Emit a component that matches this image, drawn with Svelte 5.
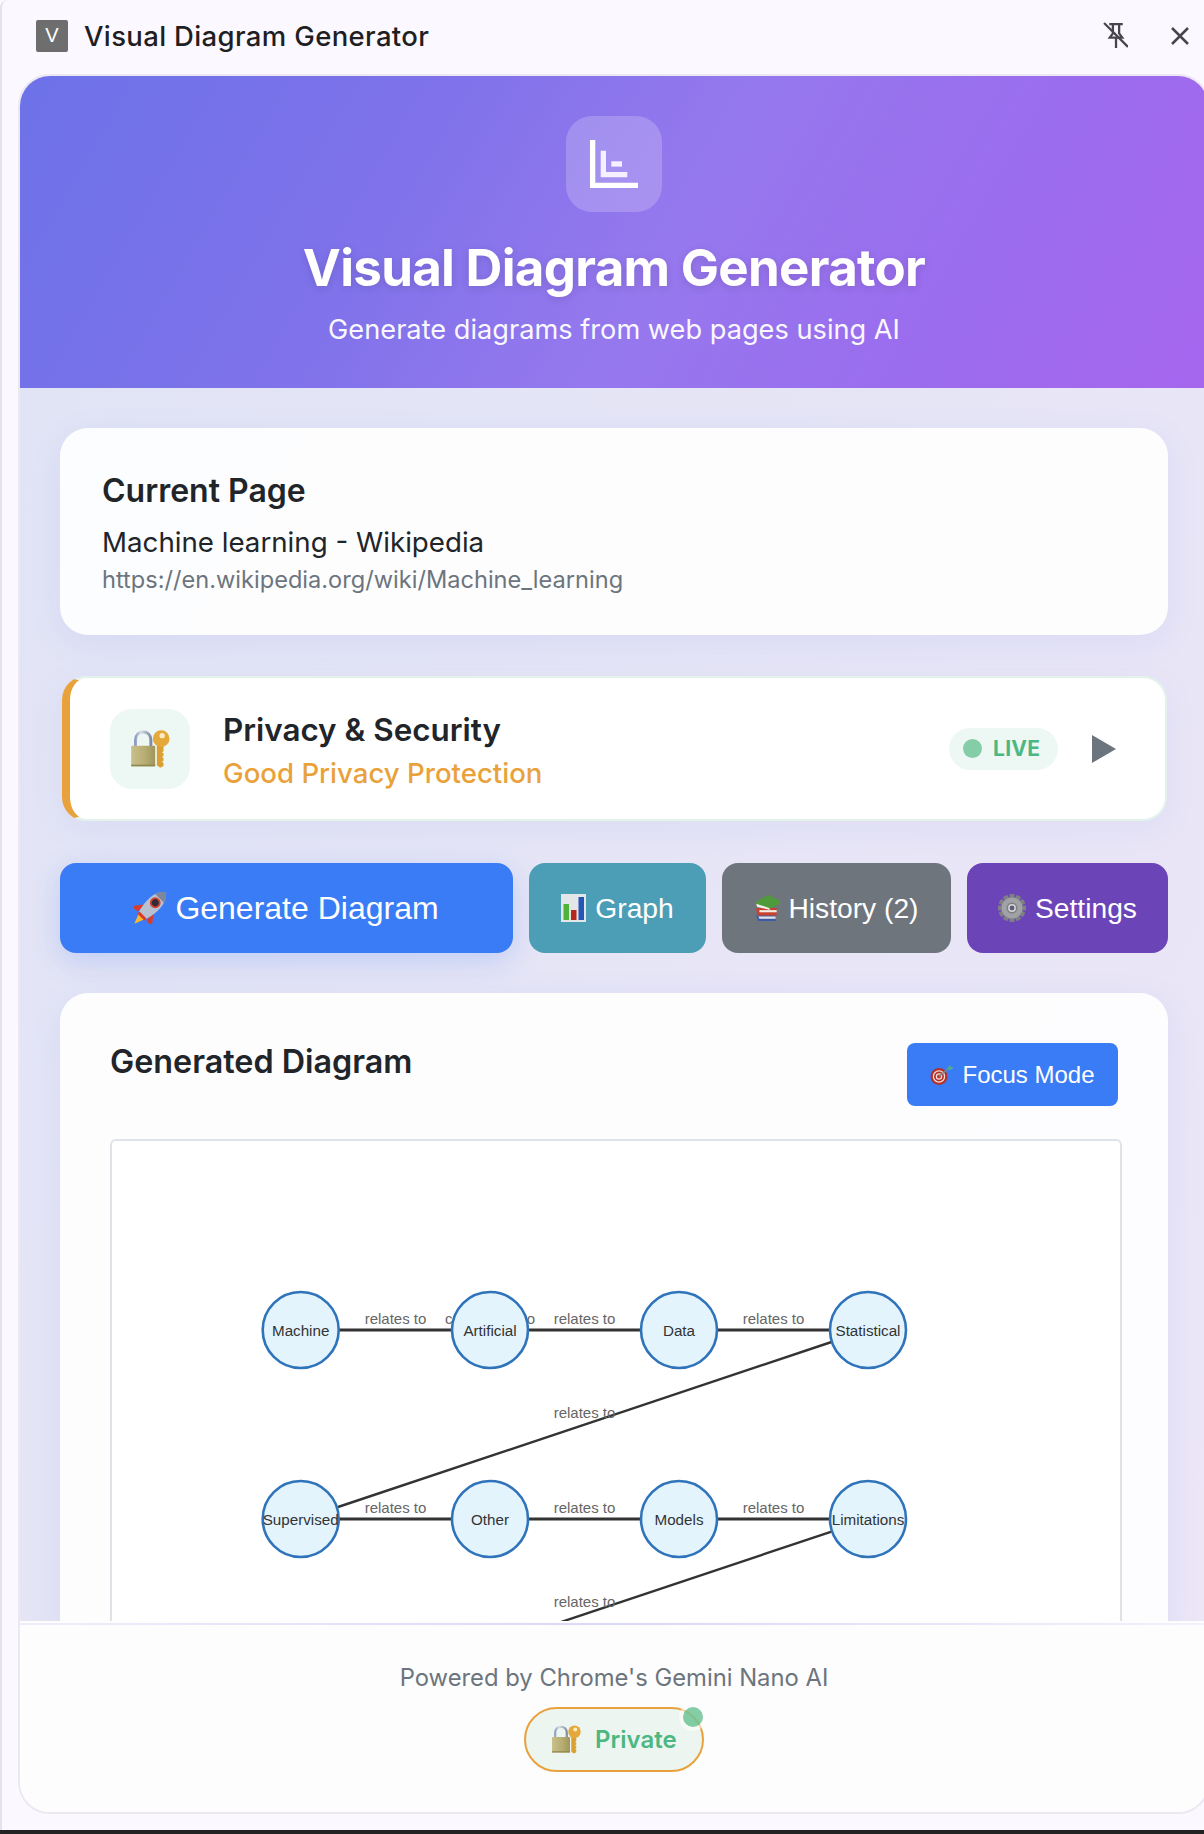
<script>
  const xs = [300.7, 490, 679, 868];
  const ys = [1330, 1519];
  const nodes = [
    { x: xs[0], y: ys[0], t: 'Machine' },
    { x: xs[1], y: ys[0], t: 'Artificial' },
    { x: xs[2], y: ys[0], t: 'Data' },
    { x: xs[3], y: ys[0], t: 'Statistical' },
    { x: xs[0], y: ys[1], t: 'Supervised' },
    { x: xs[1], y: ys[1], t: 'Other' },
    { x: xs[2], y: ys[1], t: 'Models' },
    { x: xs[3], y: ys[1], t: 'Limitations' }
  ];
  const rows = [
    [xs[0], ys[0], xs[3], ys[0]],
    [xs[0], ys[1], xs[3], ys[1]]
  ];
  const diagonals = [
    [831.5, 1342, 338, 1507],
    [831.5, 1531.6, 338, 1696.6]
  ];
  const labels = [
    { x: 395.5, y: 1318, t: 'relates to' },
    { x: 490, y: 1318, t: 'contributes to' },
    { x: 584.5, y: 1318, t: 'relates to' },
    { x: 773.5, y: 1318, t: 'relates to' },
    { x: 584.5, y: 1412, t: 'relates to' },
    { x: 395.5, y: 1507, t: 'relates to' },
    { x: 584.5, y: 1507, t: 'relates to' },
    { x: 773.5, y: 1507, t: 'relates to' },
    { x: 584.5, y: 1601, t: 'relates to' }
  ];
</script>

{#snippet lockKey(cls)}
  <svg class={cls} viewBox="0 0 116 114" aria-hidden="true">
    <defs>
      <linearGradient id="lk-body" x1="0" x2="1" y1="0" y2="0">
        <stop offset="0" stop-color="#c9c08c" />
        <stop offset="0.55" stop-color="#b8ad72" />
        <stop offset="1" stop-color="#a0955a" />
      </linearGradient>
      <linearGradient id="lk-shackle" x1="0" x2="1" y1="0" y2="0">
        <stop offset="0" stop-color="#8f9fc4" />
        <stop offset="0.35" stop-color="#d8dee8" />
        <stop offset="1" stop-color="#7f8ba2" />
      </linearGradient>
    </defs>
    <path d="M13 50V30C13 14 24 6 36 6s23 8 23 24v20" fill="none" stroke="url(#lk-shackle)" stroke-width="9" />
    <rect x="0" y="47" width="72" height="62" rx="3" fill="url(#lk-body)" />
    <rect x="0" y="104" width="72" height="5" fill="#8f8750" />
    <path d="M77 44V106l10 7 10-5V98l-5-3 5-3v-8l-5-3 5-3v-8l-5-3 5-3V44Z" fill="#dba032" />
    <circle cx="90" cy="26" r="25" fill="#e5a83a" />
    <circle cx="93" cy="17" r="8" fill="#fbecc4" />
  </svg>
{/snippet}

<div class="window">
  <div class="titlebar">
    <span class="logo">V</span>
    <span class="apptitle">Visual Diagram Generator</span>
    <svg class="pin" viewBox="0 0 24 26" aria-hidden="true">
      <path d="M6 2h13M15.500 2v9l3 4H6.500l3-4V2M12.500 15v10" fill="none" stroke="#48464c" stroke-width="2.200" />
      <path d="M1 1l23 23" stroke="#48464c" stroke-width="2.200" />
    </svg>
    <svg class="close" viewBox="0 0 18 18" aria-hidden="true">
      <path d="M1 1l16 16M17 1L1 17" stroke="#48464c" stroke-width="2.500" />
    </svg>
  </div>

  <div class="panel">
    <header class="hero">
      <div class="tile">
        <svg viewBox="0 0 48 48" aria-hidden="true">
          <path d="M0 0h5.300v42.700H48V48H0Z" fill="#fff" />
          <path d="M10.700 10.700H16V32h21.300v5.300H10.700Z" fill="#f4f0ff" />
          <rect x="21.300" y="21.300" width="10.700" height="5.300" fill="#f4f0ff" />
        </svg>
      </div>
      <h1>Visual Diagram Generator</h1>
      <p>Generate diagrams from web pages using AI</p>
    </header>

    <main class="content">
      <section class="card current">
        <h2>Current Page</h2>
        <div class="pagetitle">Machine learning - Wikipedia</div>
        <div class="url">https://en.wikipedia.org/wiki/Machine_learning</div>
      </section>

      <section class="privacy">
        <div class="privtile">{@render lockKey('lock-lg')}</div>
        <div class="privtext">
          <div class="privtitle">Privacy &amp; Security</div>
          <div class="privsub">Good Privacy Protection</div>
        </div>
        <div class="live"><span class="livedot"></span>LIVE</div>
        <svg class="play" viewBox="0 0 24 28" aria-hidden="true"><path d="M0 0l24 14L0 28Z" fill="#6c757d" /></svg>
      </section>

      <div class="actions">
        <button class="btn primary">
          <svg class="emoji rocket" viewBox="3 3 26 26" aria-hidden="true">
            <g transform="rotate(45 16 16)">
              <path d="M11 17l-7 9 7-1ZM21 17l7 9-7-1Z" fill="#dd3a2a" />
              <path d="M12.500 25h7l-3.500 9Z" fill="#f9b92f" />
              <path d="M16 -3c5 5 6.500 11 6 17-.2 4-1 8-2 11h-8c-1-3-1.800-7-2-11-.5-6 1-12 6-17Z" fill="#b9c1d0" />
              <path d="M16 -3c2.500 2.500 4 5 5 8H11c1-3 2.500-5.500 5-8Z" fill="#7d869a" />
              <circle cx="16" cy="10" r="3.600" fill="#2e2c36" stroke="#d6402f" stroke-width="1.600" />
              <path d="M12 24h8v2.500h-8Z" fill="#dd3a2a" />
            </g>
          </svg>
          Generate Diagram
        </button>
        <button class="btn teal">
          <svg class="emoji chart" viewBox="0 0 25 28" aria-hidden="true">
            <rect width="25" height="28" fill="#e4e6e8" />
            <rect x="2.500" y="10" width="5.500" height="16" fill="#4fb33a" />
            <rect x="10" y="16" width="5.500" height="10" fill="#b8281f" />
            <rect x="17.500" y="3" width="5.500" height="23" fill="#2456b8" />
          </svg>
          Graph
        </button>
        <button class="btn gray">
          <svg class="emoji books" viewBox="0 0 23 25" aria-hidden="true">
            <path d="M1 19h18v5H3Z" fill="#3b5aa8" />
            <path d="M3 20h16v2H4Z" fill="#e5e5e5" />
            <path d="M1 12h19v7H2Z" fill="#c8402e" />
            <path d="M4 14h16v2H4Z" fill="#f2ece6" />
            <path d="M1 6l11-6 11 5v3L13 13 1 9Z" fill="#4f9a3a" />
            <path d="M1 8l12 4 1 2L2 11Z" fill="#eef2ea" />
          </svg>
          History (2)
        </button>
        <button class="btn violet">
          <svg class="emoji gear" viewBox="0 0 28 28" aria-hidden="true">
            <g fill="#7e8184">
              <rect x="11.500" y="0" width="5" height="28" rx="1" />
              <rect x="11.500" y="0" width="5" height="28" rx="1" transform="rotate(30 14 14)" />
              <rect x="11.500" y="0" width="5" height="28" rx="1" transform="rotate(60 14 14)" />
              <rect x="11.500" y="0" width="5" height="28" rx="1" transform="rotate(90 14 14)" />
              <rect x="11.500" y="0" width="5" height="28" rx="1" transform="rotate(120 14 14)" />
              <rect x="11.500" y="0" width="5" height="28" rx="1" transform="rotate(150 14 14)" />
            </g>
            <circle cx="14" cy="14" r="8" fill="none" stroke="#a0a2a5" stroke-width="5" />
            <circle cx="14" cy="14" r="3.200" fill="#5e5a7a" stroke="#d6d6d8" stroke-width="1.500" />
          </svg>
          Settings
        </button>
      </div>

      <section class="card diagram">
        <div class="diagramhead">
          <h3>Generated Diagram</h3>
          <button class="focus">
            <svg class="emoji target" viewBox="0 0 24 20" aria-hidden="true">
              <circle cx="9" cy="11.500" r="8.500" fill="#b5302a" />
              <circle cx="9" cy="11.500" r="5.600" fill="none" stroke="#f2dcd6" stroke-width="1.300" />
              <circle cx="9" cy="11.500" r="2.600" fill="none" stroke="#f2dcd6" stroke-width="1.300" />
              <path d="M9 11.500L19 3" stroke="#7a8a8a" stroke-width="1.400" />
              <path d="M17 3l3-3 1 2 3 0-3 3-3 0Z" fill="#4ea7a0" />
            </svg>
            Focus Mode
          </button>
        </div>
        <div class="box">
          <svg class="graph" viewBox="112 1141 1008 600" aria-label="Generated diagram">
            {#each rows as l}
              <line x1={l[0]} y1={l[1]} x2={l[2]} y2={l[3]} class="edge row" />
            {/each}
            {#each diagonals as l}
              <line x1={l[0]} y1={l[1]} x2={l[2]} y2={l[3]} class="edge" />
            {/each}
            {#each labels as l}
              <text x={l.x} y={l.y} class="label">{l.t}</text>
            {/each}
            {#each nodes as n}
              <ellipse cx={n.x} cy={n.y} rx="38" ry="38" class="node" />
              <text x={n.x} y={n.y} class="nodetext">{n.t}</text>
            {/each}
          </svg>
        </div>
      </section>
    </main>

    <footer class="foot">
      <div class="powered">Powered by Chrome's Gemini Nano AI</div>
      <div class="badge">
        {@render lockKey('lock-sm')}
        <span>Private</span>
        <span class="badgedot"></span>
      </div>
    </footer>
  </div>
  <div class="strip"></div>
</div>

<style>
  :global(body) { margin: 0; background: #fcf8ff; }
  .window {
    width: 1204px;
    height: 1834px;
    box-sizing: border-box;
    display: flex;
    flex-direction: column;
    overflow: hidden;
    background: #fcf8ff;
    border-left: 2px solid #e6e1ea;
    border-top-left-radius: 8px;
    font-family: Inter, "Liberation Sans", sans-serif;
    color: #212529;
  }
  .titlebar {
    height: 74px;
    flex: none;
    box-sizing: border-box;
    display: flex;
    align-items: center;
    padding: 0 15px 3px 34px;
  }
  .logo {
    width: 32px;
    height: 32px;
    border-radius: 2px;
    background: #6e6e6e;
    color: #fff;
    display: flex;
    align-items: center;
    justify-content: center;
    font: 20px "Liberation Sans", sans-serif;
  }
  .apptitle { margin-left: 16px; font-size: 27.500px; font-weight: 500; color: #1f1f23; flex: 1; letter-spacing: 0.35px; }
  .pin { width: 25px; height: 27px; margin-right: 43px; }
  .close { width: 18px; height: 18px; }

  .panel {
    margin: 0 -6px 20px 16px;
    flex: 1;
    min-height: 0;
    display: flex;
    flex-direction: column;
    border: 2px solid #ece8f2;
    border-radius: 32px;
    overflow: hidden;
    background: #fdfdfe;
  }
  .hero {
    flex: none;
    height: 312px;
    box-sizing: border-box;
    padding-top: 40px;
    display: flex;
    flex-direction: column;
    align-items: center;
    color: #fff;
    background: linear-gradient(120deg, #6d72e8 0%, #7e72ea 30%, #9678ee 55%, #9b6cee 78%, #a666ee 100%);
  }
  .tile {
    width: 96px;
    height: 96px;
    border-radius: 26px;
    background: rgba(255, 255, 255, 0.2);
    display: flex;
    align-items: center;
    justify-content: center;
  }
  .tile svg { width: 48px; height: 48px; }
  h1 {
    margin: 26px 0 0;
    font-size: 51px;
    line-height: 60px;
    font-weight: 700;
    letter-spacing: -0.7px;
    text-shadow: 0 2px 8px rgba(0, 0, 0, 0.12);
  }
  .hero p { margin: 16px 0 0; font-size: 27.200px; line-height: 32px; opacity: 0.95; }

  .content {
    flex: 1;
    min-height: 0;
    overflow: hidden;
    box-sizing: border-box;
    padding: 40px 40px 0;
    display: flex;
    flex-direction: column;
    gap: 41px;
    background: linear-gradient(120deg, #e1e4f5 0%, #ece6f7 100%);
  }
  .content > * { flex: none; }
  .card {
    background: rgba(255, 255, 255, 0.9);
    border-radius: 28px;
    box-shadow: 0 8px 32px rgba(102, 126, 234, 0.1);
  }
  .current { height: 207px; box-sizing: border-box; padding: 44px 42px 0; }
  h2 { margin: 0; font-size: 32px; line-height: 38px; font-weight: 600; }
  .pagetitle { margin-top: 16px; font-size: 27.700px; line-height: 32px; }
  .url { margin-top: 8px; font-size: 23.600px; line-height: 28px; color: #6c757d; }

  .privacy {
    height: 145px;
    box-sizing: border-box;
    margin: 0 1px 0 2px;
    display: flex;
    align-items: center;
    padding: 0 49px 0 40px;
    background: #fff;
    border: 2px solid #e3f3ec;
    border-left: 8px solid #e9a23b;
    border-radius: 24px;
    box-shadow: 0 8px 32px rgba(102, 126, 234, 0.08);
  }
  .privtile {
    width: 80px;
    height: 80px;
    border-radius: 22px;
    background: #edf7f3;
    display: flex;
    align-items: center;
    justify-content: center;
    flex: none;
  }
  .lock-lg { width: 39px; height: 38px; }
  .privtext { margin-left: 33px; flex: 1; padding-top: 3px; }
  .privtitle { font-size: 31.400px; line-height: 38px; font-weight: 600; }
  .privsub { margin-top: 8px; font-size: 27.600px; line-height: 32px; font-weight: 500; color: #e9a23b; }
  .live {
    width: 109px;
    height: 42px;
    box-sizing: border-box;
    padding-left: 14px;
    border-radius: 21px;
    background: #edf7f3;
    display: flex;
    align-items: center;
    gap: 11px;
    color: #4cb782;
    font-size: 21px;
    font-weight: 700;
    letter-spacing: 0.3px;
  }
  .livedot { width: 19px; height: 19px; border-radius: 50%; background: #85cda6; }
  .play { width: 24px; height: 28px; margin-left: 34px; }

  .actions {
    display: grid;
    grid-template-columns: 453px 177px 229px 201px;
    gap: 16px;
    height: 90px;
    margin-top: 1px;
  }
  .btn {
    border: 0;
    border-radius: 16px;
    color: #fff;
    font-family: "Liberation Sans", Arial, sans-serif;
    font-size: 28.200px;
    display: flex;
    align-items: center;
    justify-content: center;
    gap: 9px;
    padding: 0;
  }
  .primary { background: #3a7bf6; font-size: 32px; box-shadow: 0 8px 28px rgba(58, 123, 246, 0.22); }
  .teal { background: #4b9eb6; }
  .gray { background: #6e757d; }
  .violet { background: #6b44b8; }
  .emoji { flex: none; }
  .rocket { width: 32px; height: 32px; }
  .chart { width: 25px; height: 28px; }
  .books { width: 25px; height: 27px; }
  .gear { width: 28px; height: 28px; }
  .target { width: 24px; height: 20px; }

  .diagram { height: 800px; box-sizing: border-box; padding: 50px; margin-top: -1px; }
  .diagramhead { display: flex; justify-content: space-between; align-items: flex-start; margin-bottom: 33px; }
  h3 { margin: 0; font-size: 32.300px; line-height: 38px; font-weight: 600; }
  .focus {
    width: 211px;
    height: 63px;
    border: 0;
    border-radius: 8px;
    padding: 0;
    background: #3a7bf6;
    color: #fff;
    font-family: "Liberation Sans", Arial, sans-serif;
    font-size: 24px;
    display: flex;
    align-items: center;
    justify-content: center;
    gap: 8px;
  }
  .box {
    margin-right: -4px;
    height: 640px;
    border: 2px solid #dfe3e8;
    border-radius: 6px;
    background: #fff;
  }
  .graph { display: block; width: 1008px; height: 600px; }
  .edge { stroke: #333; stroke-width: 2.400; }
  .row { stroke-width: 3; }
  .label {
    font-family: "Liberation Sans", Arial, sans-serif;
    font-size: 15px;
    fill: #666;
    text-anchor: middle;
    dominant-baseline: central;
  }
  .node { fill: #e3f4fd; stroke: #2f73ba; stroke-width: 2.600; }
  .nodetext {
    font-family: "Liberation Sans", Arial, sans-serif;
    font-size: 15.200px;
    fill: #333;
    text-anchor: middle;
    dominant-baseline: central;
  }

  .foot {
    flex: none;
    height: 191px;
    box-sizing: border-box;
    display: flex;
    flex-direction: column;
    align-items: center;
    background: #fdfdfe;
  }
  .foot::before {
    content: "";
    align-self: stretch;
    height: 2px;
    margin-top: 2px;
    background: linear-gradient(90deg, #efedfb, #d9d9f8 50%, #f3f1fb);
  }
  .powered { margin-top: 39px; font-size: 23.800px; line-height: 28px; color: #6c757d; }
  .badge {
    position: relative;
    margin-top: 15px;
    width: 180px;
    height: 65px;
    box-sizing: border-box;
    border: 2px solid #e9a23b;
    border-radius: 33px;
    background: #ecf5f0;
    display: flex;
    align-items: center;
    padding-left: 26px;
    gap: 14px;
    color: #4cb782;
    font-size: 24px;
    font-weight: 600;
  }
  .lock-sm { width: 29px; height: 29px; }
  .badgedot {
    position: absolute;
    top: -2px;
    right: -1px;
    width: 20px;
    height: 20px;
    border-radius: 50%;
    background: rgba(112, 196, 150, 0.85);
    box-shadow: 0 0 0 4px rgba(255, 255, 255, 0.55);
  }
  .strip { position: fixed; left: 0; right: 0; bottom: 0; height: 4px; background: #222; }
</style>
